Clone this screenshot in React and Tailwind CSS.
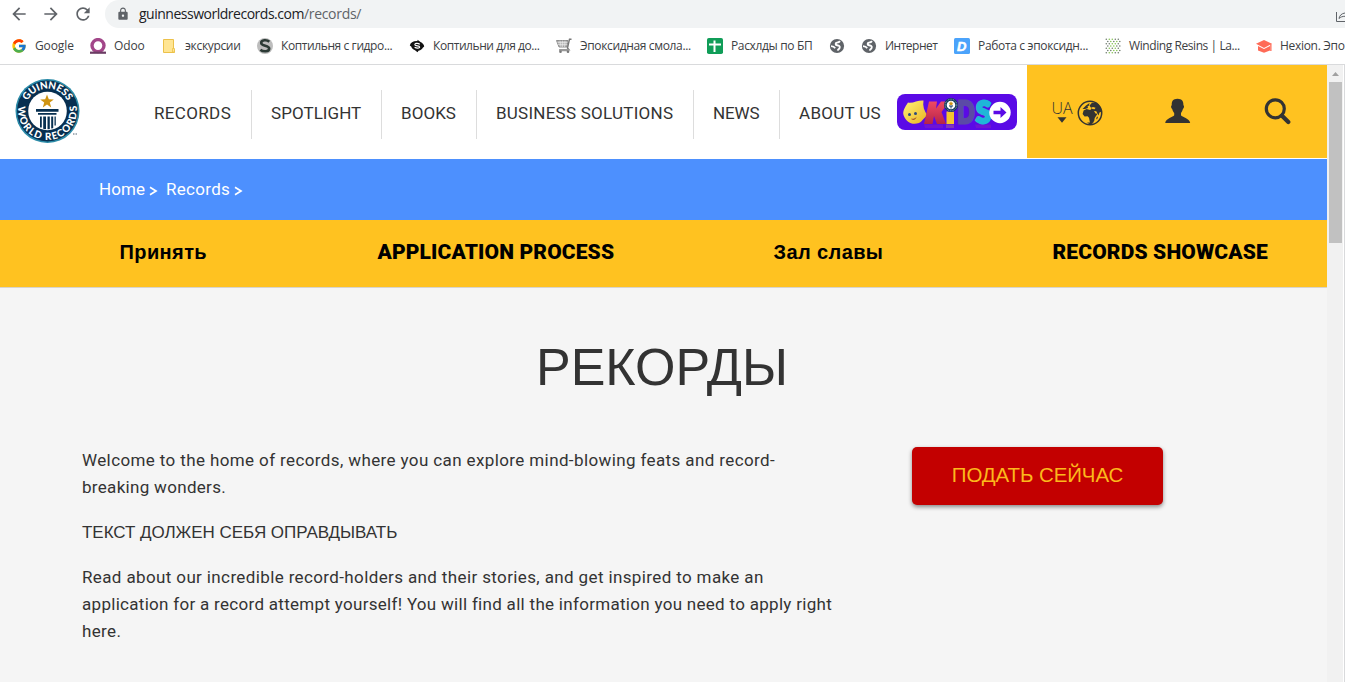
import React from 'react';
import { FcGoogle } from 'react-icons/fc';
import { MdArrowBack, MdArrowForward, MdRefresh, MdLock } from 'react-icons/md';

const OdooIcon = () => (
  <svg width="16" height="16" viewBox="0 0 16 16">
    <circle cx="8" cy="7.6" r="6" fill="none" stroke="#a24689" strokeWidth="3.4" />
    <rect x="0" y="13.6" width="16" height="2.2" fill="#6b3c64" />
  </svg>
);
const FolderIcon = () => (
  <svg width="16" height="16" viewBox="0 0 16 16">
    <path d="M2.5 1.5h10v9.5l1 1v2.5h-11z" fill="#ffe593" stroke="#ecc14a" />
    <path d="M11.5 14v-3.5h2V14z" fill="#ffe593" stroke="#ecc14a" strokeWidth=".8" />
  </svg>
);
const SteamIcon = () => (
  <svg width="16" height="16" viewBox="0 0 16 16">
    <circle cx="8" cy="8" r="8" fill="#bdbdbd" />
    <path d="M12.3 3.8C10 1.6 4.2 1.7 4.2 4.9c0 3.400 8 2.200 8 5.600 0 3.600-6.300 3.400-8.800 1.200" fill="none" stroke="#2b3a35" strokeWidth="2.600" />
  </svg>
);
const CoinIcon = () => (
  <svg width="16" height="16" viewBox="0 0 16 16">
    <path d="M.8 7.500C1.500 4.500 4 2.800 8.500 3V1.800L11.500 4C13.500 5 15 6.500 15.200 8.500L13.800 9.800C13 11.500 12 12 9.500 12.800L8.500 14.200 6 12.200C4 11.500 2.800 10.200 2.200 8.500z" fill="#111" />
    <path d="M10.800 6.200C8.500 4.600 5.400 5.400 6 7c.6 1.300 4.500.6 4.600 2 .1 1.500-3 1.500-5 .3" fill="none" stroke="#fff" strokeWidth="1.200" />
  </svg>
);
const CartIcon = () => (
  <svg width="16" height="16" viewBox="0 0 16 16">
    <path d="M.5 2.500h11.500l-1 6.500H3z" fill="#b9b9b9" stroke="#858585" strokeWidth=".9" />
    <path d="M1.500 4.500h10M2 6.500h9.500M4 2.500l1 6.500M6.500 2.500V9M9 2.500L8.500 9" stroke="#f3f3f3" strokeWidth=".5" />
    <path d="M15.500 1.200h-2L11.500 10l1.500 1.800H3.500" fill="none" stroke="#777" strokeWidth="1.400" />
    <path d="M3.500 11h9.500l-.5 2.200H3z" fill="#999" />
    <circle cx="4.500" cy="13.800" r="1.300" fill="#777" /><circle cx="12" cy="13.800" r="1.300" fill="#777" />
  </svg>
);
const SheetIcon = () => (
  <svg width="16" height="16" viewBox="0 0 16 16">
    <rect width="16" height="16" rx="1.800" fill="#109d58" />
    <path d="M2 6.500h12M7.500 2.500V14" stroke="#fff" strokeWidth="2" />
  </svg>
);
const WorldIcon = () => (
  <svg width="16" height="16" viewBox="0 0 16 16">
    <circle cx="8" cy="8" r="7.100" fill="#5f6368" />
    <path d="M11 3.200c-1 1.300-1.500 1.300-3.200 1.500-1.800.3-1.300 2.300.2 2.600 2.200.4 3.300 1 2.600 2.700-.4 1-1.600 1-1.800 2.600" fill="none" stroke="#fff" strokeWidth="1.900" />
    <path d="M2 8.200c2.200.2 3.400.8 4.200 2" fill="none" stroke="#fff" strokeWidth="1.700" />
  </svg>
);
const DIcon = () => (
  <svg width="16" height="16" viewBox="0 0 16 16">
    <rect width="16" height="16" rx="1.500" fill="#4ba3fb" />
    <text x="3" y="12.600" fontFamily="Liberation Sans" fontWeight="700" fontStyle="italic" fontSize="13" fill="#fff" stroke="#fff" strokeWidth=".5">D</text>
  </svg>
);
const DotsIcon = () => (
  <svg width="16" height="16" viewBox="0 0 16 16">
    {[0, 1, 2, 3, 4, 5, 6].map((r) =>
      [0, 1, 2, 3, 4].map((c) => (
        <circle key={r + '-' + c} cx={1.3 + c * 3 + (r % 2) * 1.5} cy={1.2 + r * 2.25} r=".8" fill={(r + c) % 3 === 0 || c === 0 || c === 4 ? '#6f7b6f' : '#86c552'} />
      ))
    )}
  </svg>
);
const CapIcon = () => (
  <svg width="16" height="16" viewBox="0 0 16 16">
    <path d="M8 2l8 3.800-8 4.200-8-4.200z" fill="#ff6b57" />
    <path d="M2 8l6 3.100L14 8v4.500L8 14.800l-6-2.300zM14.200 6h1.300v7h-1.300z" fill="#ff6b57" />
  </svg>
);

const bookmarks = [
  { icon: <FcGoogle size={16} />, label: 'Google', cls: 'w-[79px] tracking-[-0.1px]' },
  { icon: <OdooIcon />, label: 'Odoo', cls: 'w-[71px] tracking-[-0.1px]' },
  { icon: <FolderIcon />, label: 'экскурсии', cls: 'w-[96px] tracking-[-0.33px]' },
  { icon: <SteamIcon />, label: 'Коптильня с гидро...', cls: 'w-[152px] tracking-[-0.4px]' },
  { icon: <CoinIcon />, label: 'Коптильни для до...', cls: 'w-[147px] tracking-[-0.43px]' },
  { icon: <CartIcon />, label: 'Эпоксидная смола...', cls: 'w-[151px] tracking-[-0.35px]' },
  { icon: <SheetIcon />, label: 'Расхлды по БП', cls: 'w-[122px] tracking-[-0.35px]' },
  { icon: <WorldIcon />, label: '', cls: 'w-[32px]' },
  { icon: <WorldIcon />, label: 'Интернет', cls: 'w-[93px] tracking-[-0.5px]' },
  { icon: <DIcon />, label: 'Работа с эпоксидн...', cls: 'w-[151px] tracking-[-0.33px]' },
  { icon: <DotsIcon />, label: 'Winding Resins | La...', cls: 'w-[151px] tracking-[-0.42px]' },
  { icon: <CapIcon />, label: 'Hexion. Эпо', cls: 'w-[95px] tracking-[-0.3px]' },
];

const navItems = [
  { label: 'RECORDS', cls: 'w-[118px] tracking-[0.35px] border-r' },
  { label: 'SPOTLIGHT', cls: 'w-[130px] tracking-[0.05px] border-r' },
  { label: 'BOOKS', cls: 'w-[95px] tracking-[0.05px] border-r' },
  { label: 'BUSINESS SOLUTIONS', cls: 'w-[217px] tracking-[0.25px] border-r' },
  { label: 'NEWS', cls: 'w-[86px] tracking-[-0.1px] border-r' },
  { label: 'ABOUT US', cls: 'w-[117px] tracking-[0.3px]' },
];

const Browser = () => (
  <div className="bg-white border-b border-[#d9dadc] h-[65px] shrink-0 font-['Open_Sans',sans-serif]">
    <div className="flex h-7 text-[#5f6368]">
      <div className="flex w-[105px] pl-[9px] gap-3 pt-1 shrink-0">
        <MdArrowBack size={20} /><MdArrowForward size={20} /><MdRefresh size={20} />
      </div>
      <div className="flex grow bg-[#f1f3f4] rounded-l-[14px] h-7 items-center pl-[11px]">
        <MdLock size={14} />
        <span className="ml-[9px] text-sm tracking-[-0.49px] text-[#202124]">guinnessworldrecords.com</span>
        <span className="text-sm tracking-[-0.3px]">/records/</span>
        <svg className="ml-auto mt-[5px]" width="11" height="14" viewBox="0 0 11 14">
          <path d="M2.500 2v9.500H11" fill="none" stroke="#5f6368" />
          <path d="M5 8.500C5.500 5.500 7.500 3.500 11 3M5 8.500c1.500-1.500 3.500-2.200 6-2.200" fill="none" stroke="#5f6368" />
        </svg>
      </div>
    </div>
    <div className="flex h-9 items-center pl-[11px] overflow-hidden">
      {bookmarks.map((b, i) => (
        <div key={i} className={`flex shrink-0 items-center gap-2 text-xs text-[#3c4043] whitespace-nowrap ${b.cls}`}>
          {b.icon}<span>{b.label}</span>
        </div>
      ))}
    </div>
  </div>
);

const Logo = () => (
  <svg width="66" height="66" viewBox="0 0 66 66">
    <defs>
      <path id="ringTop" d="M10.200 32a22.300 22.300 0 0 1 44.600 0" />
      <path id="ringBottom" d="M4.100 24.500A29.300 29.300 0 1 0 60.900 24.500" />
      <clipPath id="disc"><circle cx="32.500" cy="32" r="18.500" /></clipPath>
    </defs>
    <circle cx="32.500" cy="32" r="32" fill="#2b8ba8" />
    <circle cx="32.500" cy="32" r="30.400" fill="#072f50" />
    <circle cx="32.500" cy="32" r="19.300" fill="#fff" />
    <g fontFamily="Lato" fontWeight="900" fontSize="10" fill="#fff">
      <text textLength="49"><textPath href="#ringTop" startOffset="50%" textAnchor="middle">GUINNESS</textPath></text>
      <text><textPath href="#ringBottom" startOffset="3%" textLength="101">WORLD RECORDS</textPath></text>
    </g>
    <path d="M32 15.500l1.800 4.700 5 .2-4 3.100 1.400 4.900-4.200-2.800-4.200 2.800 1.400-4.900-4-3.100 5-.2z" fill="#cf9412" />
    <g fill="#072f50" clipPath="url(#disc)">
      <path d="M21 30h22.500v2.800H21zM23 34h18.500v1.800H23zM25 37.500h1.800v11H25zM28.200 37.500H31v13h-2.800zM32.500 37.500h2.300v13h-2.300zM36.200 37.500h2v12h-2zM39.500 37.500h1.300v9h-1.300z" />
    </g>
    <path d="M58 54h1.500v2H58zM60.500 54H62v2h-1.500z" fill="#a9b2ba" />
  </svg>
);

const KidsBadge = () => (
  <svg width="120" height="36" viewBox="0 0 120 36">
    <defs>
      <linearGradient id="face" x1="0" y1="0" x2="1" y2="1"><stop offset="0" stopColor="#fff27a" /><stop offset="1" stopColor="#e9b21e" /></linearGradient>
      <linearGradient id="k" x1="0" y1="0" x2="0" y2="1"><stop offset="0" stopColor="#ef4a62" /><stop offset="1" stopColor="#b62448" /></linearGradient>
      <linearGradient id="s" x1="0" y1="0" x2="0" y2="1"><stop offset="0" stopColor="#2fd0e4" /><stop offset="1" stopColor="#129dcb" /></linearGradient>
    </defs>
    <rect width="120" height="36" rx="8" fill="#5a0ae6" />
    <path d="M27 30.500h19v3.500H28zM78 30.500h16V34H79z" fill="#7d1bc8" opacity=".6" />
    <path d="M49 30.500h8V34h-8z" fill="#9b55a0" opacity=".6" />
    <path d="M11 8.500C16 9.500 21 6 26.500 6.500 25.500 12 27 17 31 22c-4 .5-5 5-9 7-7 2.500-13-1-15.500-8C5.500 17 8 13 11 8.500z" fill="url(#face)" />
    <circle cx="12.500" cy="20.500" r="1.500" fill="#2d4b7a" /><circle cx="18.500" cy="19.500" r="1.500" fill="#2d4b7a" />
    <path d="M14 24.500c2 .8 4 0 5.500-1.800-.2 3-4 4.500-5.500 1.800z" fill="#a4502d" />
    <g fontFamily="Lato" fontWeight="900" fontSize="30" strokeWidth="3">
      <text x="60.500" y="29" textLength="17" lengthAdjust="spacingAndGlyphs" fill="#5b4aa6" stroke="#5b4aa6">D</text>
      <text x="79" y="29" textLength="15" lengthAdjust="spacingAndGlyphs" fill="#1fb6d8" stroke="#1fb6d8">S</text>
    </g>
    <path d="M32 7.500h8l-1 7 5-7h8l-7.500 10.500L49 30h-9l-3-8-1.500 8H27z" fill="url(#k)" />
    <path d="M49.500 17.500h7.500V30h-7.500z" fill="#f5c52e" />
    <circle cx="54" cy="11" r="7" fill="#12395d" /><circle cx="54" cy="11" r="5.800" fill="none" stroke="#8ca3b3" strokeWidth="1" strokeDasharray="1 .8" /><circle cx="54" cy="11" r="4.300" fill="#fff" />
    <path d="M54 7l.8 1.800h1.700l-1.300 1.200.5 1.500-1.700-.8-1.700.8.5-1.500-1.300-1.200h1.700z" fill="#cf9412" /><path d="M52 12h4M54 12v2.500" stroke="#12395d" />
    <circle cx="103" cy="18.500" r="10.700" fill="#fff" />
    <path d="M96.500 16.800h7V13l6 5.500-6 5.500v-3.800h-7z" fill="#5a0ae6" />
  </svg>
);

const GlobeIcon = () => (
  <svg width="26" height="26" viewBox="0 0 26 26">
    <circle cx="13" cy="13" r="11.700" fill="none" stroke="#333" strokeWidth="1.500" />
    <path d="M5.500 9L9 5.500 12.500 3l-.5 2.500-1.500 1 .5 1.500-3 1z" fill="#333" />
    <path d="M12.500 5.500l2.500-2.800 4.500.3c3 1.800 4.800 4.500 5.300 8.500l-2.300 1-1 3-2.200-4.200-2.300-.3 1.500 2.500 2 .2-2.800 4.300-.5 3-2.500 3-1.700-1-1-5.200-1.400-1.500-3 .2-2-2.500 1-3.500 3-1.500 3.500 1 1.500-1.300z" fill="#333" />
    <path d="M14 7.800l2-.8 2.500.8-.8 1.500-2.200-.3z" fill="#ffc220" />
    <path d="M20 16.500l1 .5-1 2.500-.8-.7zM10 22.500h7l-4 2z" fill="#333" />
  </svg>
);

const SiteHeader = () => (
  <header className="flex h-[94px] shrink-0 bg-white">
    <div className="w-[134px] pl-[14.500px] pt-[14px]"><Logo /></div>
    <nav className="flex pt-[25px] font-[Roboto,sans-serif] text-[17px] text-[#333]">
      {navItems.map((n, i) => (
        <a key={n.label} className={`flex h-[49px] items-center whitespace-nowrap border-[#ddd] ${i ? 'pl-[19px]' : 'pl-5'} ${n.cls}`}>
          <span className="-mt-px">{n.label}</span>
        </a>
      ))}
    </nav>
    <div className="w-[130px] pt-[29px]"><KidsBadge /></div>
    <div className="flex grow h-[93px] bg-[#ffc220] text-[#333]">
      <div className="flex w-[137px] pl-[23.500px] pt-[35px]">
        <div className="flex flex-col items-center w-[23px]">
          <span className="font-['Open_Sans',sans-serif] text-base font-light leading-[17px]">UA</span>
          <svg width="10" height="6" viewBox="0 0 10 6"><path d="M.5.3h9L5 5.700z" fill="#333" /></svg>
        </div>
        <div className="ml-[3px]"><GlobeIcon /></div>
      </div>
      <svg className="mt-[33px]" width="27" height="26" viewBox="0 0 27 26">
        <path d="M13.500.8c4.500 0 6.200 2.800 5.900 6.500.9 0 .9 3-.5 3.700-.4 2-1.200 3-1.900 3.900v2.300c1 1.900 8.500 2.800 9.200 7.800H1.200c.6-5 8.100-5.900 9-7.800v-2.300c-.8-.9-1.600-1.900-2-3.900-1.300-.7-1.400-3.700-.4-3.700C7.400 3.600 9 .8 13.500.8z" fill="#333" />
      </svg>
      <svg className="mt-[33px] ml-[73px]" width="27" height="27" viewBox="0 0 27 27">
        <circle cx="11.300" cy="10.800" r="9" fill="none" stroke="#333" strokeWidth="3.200" />
        <path d="M18 17.700l6.300 6.300" stroke="#333" strokeWidth="4.200" strokeLinecap="round" />
      </svg>
    </div>
  </header>
);

const Chevron = () => (
  <svg width="9" height="10" viewBox="0 0 9 10"><path d="M1 1.300L7 5 1 8.700" fill="none" stroke="#fff" strokeWidth="1.700" /></svg>
);

const ApplyLinks = () => (
  <div className="flex h-[68px] shrink-0 bg-[#ffc220] border-b border-[#d8d4cc] text-black font-bold text-[21px] leading-6 pt-5 whitespace-nowrap font-[Roboto,sans-serif]">
    <a className="w-[377.500px] pl-[119.500px] font-['Liberation_Sans',sans-serif] text-[20px] tracking-[0.4px]">Принять</a>
    <a className="w-[396px] tracking-[0.14px] font-black">APPLICATION PROCESS</a>
    <a className="w-[279px] font-['Liberation_Sans',sans-serif] text-[20px] tracking-[0.4px]">Зал славы</a>
    <a className="tracking-[0.15px] font-black">RECORDS SHOWCASE</a>
  </div>
);

export default function App() {
  return (
    <div className="flex flex-col w-[1345px] h-[682px] overflow-hidden bg-white">
      <Browser />
      <div className="flex grow min-h-0">
        <div className="flex flex-col w-[1327px]">
          <SiteHeader />
          <div className="flex h-[61px] shrink-0 items-center bg-[#4d90fe] pl-[99px] text-white text-[17px] font-[Roboto,sans-serif]">
            <span className="w-[50px] tracking-[0.1px]">Home</span>
            <span className="w-[17px] pt-[3px]"><Chevron /></span>
            <span className="w-[67.500px] tracking-[0.3px]">Records</span>
            <span className="pt-[3px]"><Chevron /></span>
          </div>
          <ApplyLinks />
          <main className="grow bg-[#f5f5f5] text-[#333] pt-[49px]">
            <h1 className="text-center pr-[3px] text-[52px] leading-[60px] font-['Liberation_Sans',sans-serif]">РЕКОРДЫ</h1>
            <div className="flex pt-[50px] pl-[82px]">
              <div className="flex flex-col gap-[18px] w-[830px] text-[17px] leading-[27px] whitespace-nowrap font-[Roboto,sans-serif]">
                <p>
                  <span className="block tracking-[0.385px]">Welcome to the home of records, where you can explore mind-blowing feats and record-</span>
                  <span className="block tracking-[0.31px]">breaking wonders.</span>
                </p>
                <p className="font-['Liberation_Sans',sans-serif] tracking-[-0.04px]">ТЕКСТ ДОЛЖЕН СЕБЯ ОПРАВДЫВАТЬ</p>
                <p>
                  <span className="block tracking-[0.375px]">Read about our incredible record-holders and their stories, and get inspired to make an</span>
                  <span className="block tracking-[0.295px]">application for a record attempt yourself! You will find all the information you need to apply right</span>
                  <span className="block tracking-[0.35px]">here.</span>
                </p>
              </div>
              <button className="flex justify-center w-[251px] h-[58px] pt-4 rounded-[5px] bg-[#c30000] text-[#fcb81c] text-[20.500px] tracking-[-0.1px] leading-6 shadow-[0_2px_4px_rgba(0,0,0,0.45)] font-['Liberation_Sans',sans-serif]">ПОДАТЬ СЕЙЧАС</button>
            </div>
          </main>
        </div>
        <div className="flex flex-col items-center w-4 bg-[#f1f1f1]">
          <svg width="16" height="17" viewBox="0 0 16 17"><path d="M5 11l3.500-4 3.500 4z" fill="#a0a0a0" /></svg>
          <div className="ml-px w-[13px] h-[161px] bg-[#c1c1c1]" />
        </div>
        <div className="grow border-l border-white bg-[#d9dadc]" />
      </div>
    </div>
  );
}
